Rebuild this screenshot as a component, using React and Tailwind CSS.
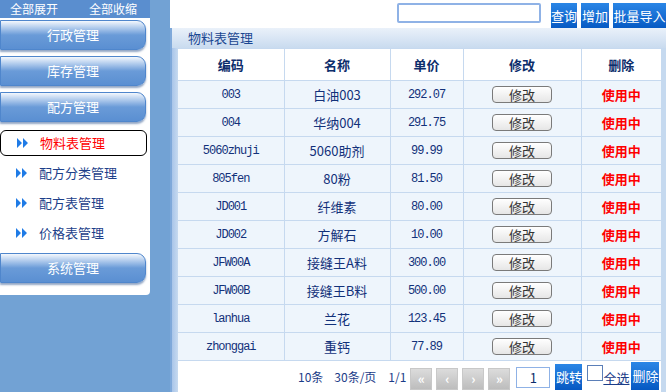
import { useState } from "react";

const rows = [
  ["003", "白油003", "292.07"],
  ["004", "华纳004", "291.75"],
  ["5060zhuji", "5060助剂", "99.99"],
  ["805fen", "80粉", "81.50"],
  ["JD001", "纤维素", "80.00"],
  ["JD002", "方解石", "10.00"],
  ["JFW00A", "接缝王A料", "300.00"],
  ["JFW00B", "接缝王B料", "500.00"],
  ["lanhua", "兰花", "123.45"],
  ["zhonggai", "重钙", "77.89"],
];

const cn = { fontFamily: '"Noto Sans CJK SC", "Liberation Sans", sans-serif' };
const mono = { fontFamily: '"Liberation Mono", "Noto Sans CJK SC", monospace' };

const MenuButton = ({ label }) => (
  <div className="h-[30px] w-[146px] rounded-r-[9px] bg-gradient-to-b from-[#f4f8fd] via-[#6a9bd8] to-[#5a8fd2] shadow-[0_2px_2px_rgba(40,80,140,0.5)] flex items-center justify-center text-white text-[13px] border border-[#4f86cc]">
    {label}
  </div>
);

const SubItem = ({ label, active }) => (
  <div
    className={`h-[26px] w-[147px] flex items-center pl-[16px] gap-[11px] text-[13px] ${
      active ? "border border-black rounded-[6px] text-[#ff0000]" : "text-[#1d3f8a]"
    }`}
  >
    <svg width="12" height="10" viewBox="0 0 12 10">
      <path d="M0 0 L5 5 L0 10 Z M6 0 L11 5 L6 10 Z" fill="#1f7be6" />
    </svg>
    <span>{label}</span>
  </div>
);

const PageBtn = ({ glyph }) => (
  <div className="w-[22px] h-[22px] bg-gradient-to-b from-[#dcdcdc] to-[#bdbdbd] border border-[#c8c8c8] flex items-center justify-center text-white text-[13px] font-bold">
    {glyph}
  </div>
);

const BlueBtn = ({ label, className = "" }) => (
  <div className={`h-[26px] bg-gradient-to-b from-[#2a86e6] to-[#0558c2] text-white text-[13px] flex items-center justify-center ${className}`}>
    {label}
  </div>
);

const App = () => {
  const [query, setQuery] = useState("");
  return (
    <div className="w-[666px] h-[392px] bg-[#72a2d4] flex overflow-hidden" style={cn}>
      <div className="w-[150px] flex flex-col">
        <div className="h-[18px] bg-[#5a8ecf] flex justify-between items-center px-[10px] pr-[13px] text-white text-[12px]">
          <span>全部展开</span>
          <span>全部收缩</span>
        </div>
        <div className="bg-white h-[277px] rounded-br-[4px] pt-[2px] flex flex-col">
          <div className="flex flex-col gap-[6px]">
            <MenuButton label="行政管理" />
            <MenuButton label="库存管理" />
            <MenuButton label="配方管理" />
          </div>
          <div className="flex flex-col gap-[4px] mt-[8px]">
            <SubItem label="物料表管理" active />
            <SubItem label="配方分类管理" />
            <SubItem label="配方表管理" />
            <SubItem label="价格表管理" />
          </div>
          <div className="mt-[7px]">
            <MenuButton label="系统管理" />
          </div>
        </div>
      </div>

      <div className="w-[20px]" />

      <div className="flex-1 flex flex-col">
        <div className="h-[28px] bg-white flex items-start justify-end pt-[3px] gap-[4px]">
          <input
            value={query}
            onChange={(e) => setQuery(e.target.value)}
            className="w-[144px] h-[20px] border-2 border-[#8fb2e6] rounded-[2px] outline-none mr-[6px] px-1 text-[12px]"
          />
          <BlueBtn label="查询" className="w-[26px]" />
          <BlueBtn label="增加" className="w-[28px]" />
          <BlueBtn label="批量导入" className="w-[53px]" />
        </div>

        <div className="flex-1 flex">
          <div className="w-[2px] bg-[#7fa9da]" />
          <div className="flex-1 flex flex-col">
            <div className="h-[20px] bg-gradient-to-b from-[#eaf1fa] to-[#c9dbef] flex items-center pl-[16px] text-[13px] text-[#1b4791]">
              物料表管理
            </div>
            <div className="flex-1 flex">
              <div className="w-[6px] bg-gradient-to-r from-[#a9c5e9] to-[#c7daf0]" />
              <div className="flex-1 bg-white flex flex-col">
                <table className="w-[483px] border-collapse text-center">
                  <thead>
                    <tr className="h-[32px] bg-white text-[#0c2d6b] text-[13px] font-bold">
                      <th className="w-[106px] border border-[#c6d9ef] border-l-0">编码</th>
                      <th className="w-[106px] border border-[#c6d9ef]">名称</th>
                      <th className="w-[73px] border border-[#c6d9ef]">单价</th>
                      <th className="w-[118px] border border-[#c6d9ef]">修改</th>
                      <th className="w-[80px] border border-[#c6d9ef] border-r-0">删除</th>
                    </tr>
                  </thead>
                  <tbody>
                    {rows.map(([code, name, price]) => (
                      <tr key={code} className="h-[28px] bg-[#eef5fc] text-[#12317a]">
                        <td className="border border-[#c6d9ef] border-l-0 text-[12px] tracking-[-1px]" style={mono}>{code}</td>
                        <td className="border border-[#c6d9ef] text-[13px]">{name}</td>
                        <td className="border border-[#c6d9ef] text-[12px] tracking-[-1px]" style={mono}>{price}</td>
                        <td className="border border-[#c6d9ef]">
                          <div className="mx-auto w-[60px] h-[17px] rounded-[4px] border border-[#7a7a7a] bg-gradient-to-b from-white to-[#e6e6e6] text-[13px] text-[#333] flex items-center justify-center">
                            修改
                          </div>
                        </td>
                        <td className="border border-[#c6d9ef] border-r-0 text-[13px] font-bold text-[#ff0000]">使用中</td>
                      </tr>
                    ))}
                  </tbody>
                </table>
                <div className="flex-1 flex items-end pb-[2px] text-[12px] text-[#1b3c88]">
                  <span className="ml-[120px] mb-[4px]">10条</span>
                  <span className="ml-[11px] mb-[4px]">30条/页</span>
                  <span className="ml-[12px] mb-[4px]">1/1</span>
                  <div className="flex gap-[4px] ml-[4px]">
                    <PageBtn glyph="«" />
                    <PageBtn glyph="‹" />
                    <PageBtn glyph="›" />
                    <PageBtn glyph="»" />
                  </div>
                  <div className="ml-[6px] mb-[2px] w-[34px] h-[21px] border border-[#8fb2e6] flex items-center justify-center text-[13px] text-[#0c2d6b]">
                    1
                  </div>
                  <BlueBtn label="跳转" className="ml-[5px] w-[27px]" />
                  <div className="ml-[5px] self-start mt-[4px] w-[16px] h-[16px] border border-[#5b7fb8] bg-white" />
                  <span className="self-end mb-[3px] text-[13px] text-[#1b3c88] underline">全选</span>
                  <BlueBtn label="删除" className="ml-[2px] w-[28px] h-[28px]" />
                </div>
              </div>
              <div className="w-[5px] bg-[#c5d9ef]" />
            </div>
          </div>
        </div>
      </div>
    </div>
  );
};

export default App;
